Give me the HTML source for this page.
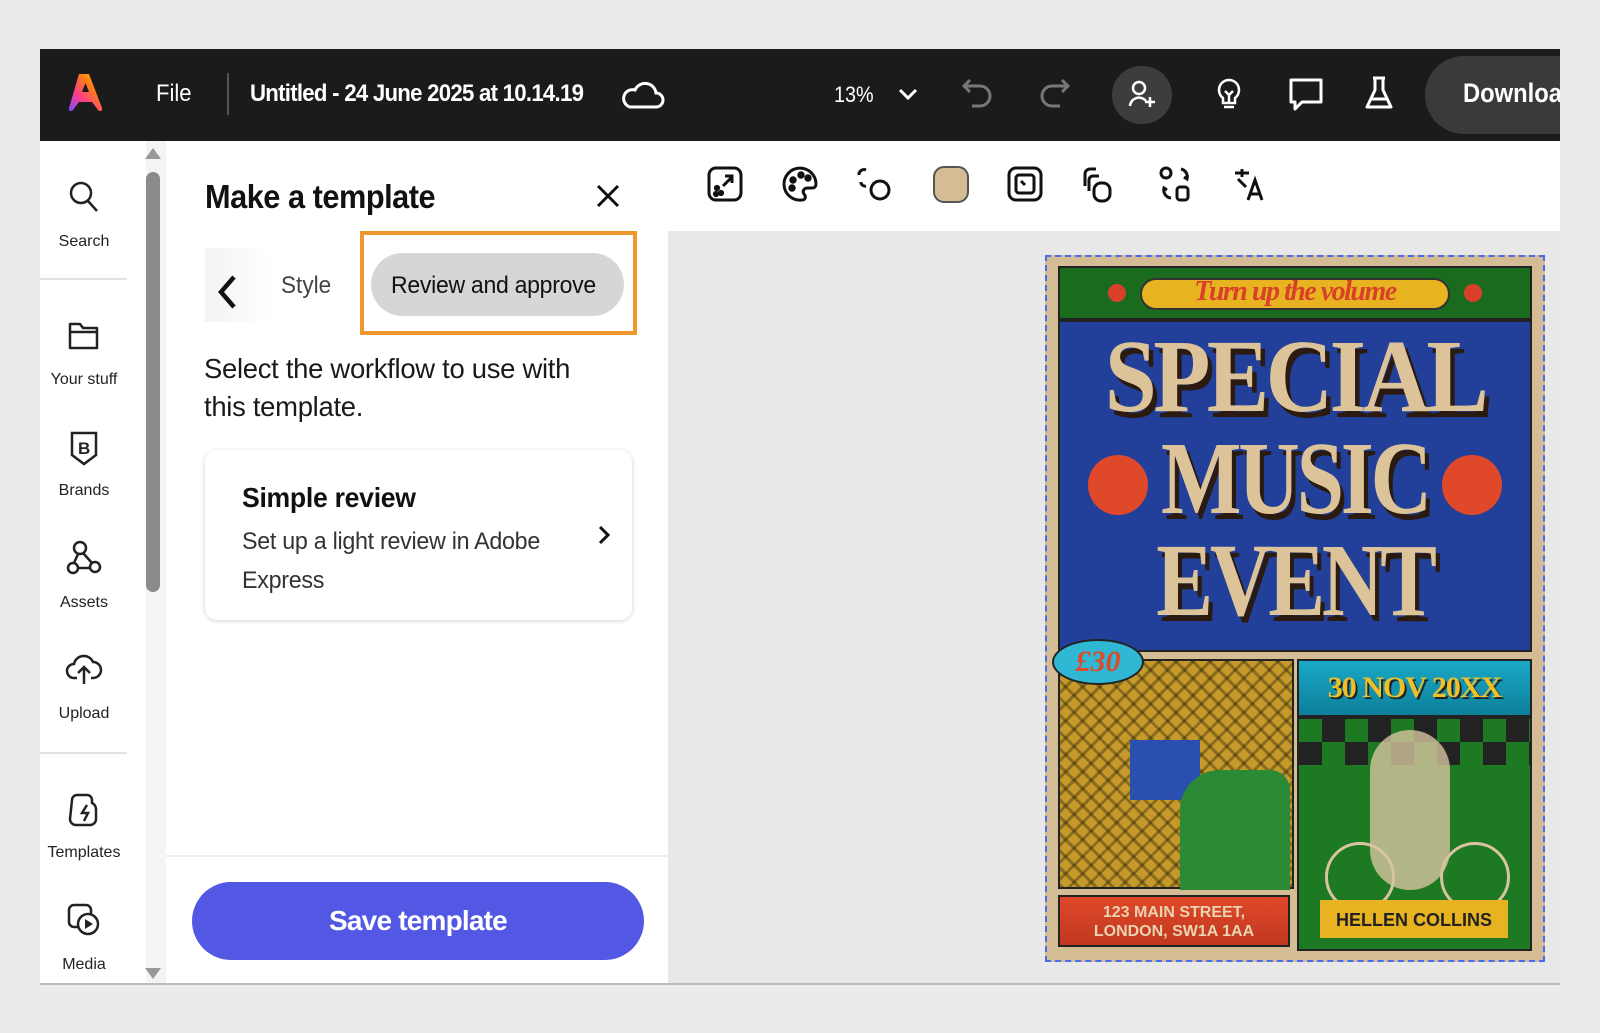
<!DOCTYPE html>
<html><head><meta charset="utf-8"><style>
*{margin:0;padding:0;box-sizing:border-box}
body{width:1600px;height:1033px;background:#ebebeb;font-family:"Liberation Sans",sans-serif;position:relative;overflow:hidden}
.a{position:absolute}
.top{left:40px;top:49px;width:1520px;height:92px;background:#1b1b1b}
.wt{color:#fff;font-size:24px}
.rail{left:40px;top:141px;width:125px;height:843px;background:#fff}
.ri{width:88px;text-align:center;font-size:16px;color:#222}
.panel{left:166px;top:141px;width:502px;height:843px;background:#fff}
.canvas{left:668px;top:141px;width:892px;height:843px;background:#e8e8e8}
.tb{left:668px;top:141px;width:892px;height:90px;background:#fff}
svg{overflow:visible}
.sx{transform-origin:0 0;white-space:nowrap}
</style></head><body>
<div class="a top"></div>
<svg class="a" style="left:65px;top:72px" width="38" height="40" viewBox="0 0 38 40"><defs><linearGradient id="g" x1="0" y1="1" x2="1" y2="0"><stop offset="0" stop-color="#7a4dff"/><stop offset=".35" stop-color="#ff3c8c"/><stop offset=".65" stop-color="#ff7a1a"/><stop offset="1" stop-color="#ffcc00"/></linearGradient></defs><path d="M14 2h10l13 34c1 3-2 4-4 2l-6-8H14l-6 8c-2 2-5 1-4-2z M17 20h7l-3.5-9z" fill="url(#g)" fill-rule="evenodd"/></svg>
<div class="a wt sx" style="left:156px;top:80px;transform:scaleX(.92)">File</div>
<div class="a" style="left:227px;top:73px;width:2px;height:42px;background:#555"></div>
<div class="a wt sx" style="left:250px;top:80px;font-weight:bold;letter-spacing:-0.8px;transform:scaleX(.925)">Untitled - 24 June 2025 at 10.14.19</div>
<svg class="a" style="left:622px;top:78px" width="42" height="32" viewBox="0 0 42 32"><path d="M8 29h26a7 7 0 0 0 0-14 11 11 0 0 0-21-3 8 8 0 0 0-5 17z" fill="none" stroke="#fff" stroke-width="3"/></svg>
<div class="a wt sx" style="left:834px;top:82px;font-size:22px;transform:scaleX(.9)">13%</div>
<svg class="a" style="left:898px;top:88px" width="20" height="14"><path d="M2 2l8 8 8-8" fill="none" stroke="#fff" stroke-width="3"/></svg>
<svg class="a" style="left:960px;top:76px" width="36" height="36"><path d="M10 4L4 10l6 6M4 10h16a10 10 0 0 1 0 20h-8" fill="none" stroke="#777" stroke-width="3"/></svg>
<svg class="a" style="left:1036px;top:76px" width="36" height="36"><path d="M26 4l6 6-6 6M32 10H16a10 10 0 0 0 0 20h8" fill="none" stroke="#777" stroke-width="3"/></svg>
<div class="a" style="left:1112px;top:66px;width:60px;height:58px;border-radius:30px;background:#3d3d3d"></div>
<svg class="a" style="left:1128px;top:80px" width="30" height="30"><circle cx="11" cy="8" r="6" fill="none" stroke="#fff" stroke-width="2.5"/><path d="M2 26a9 9 0 0 1 16-5M22 17v10M17 22h10" fill="none" stroke="#fff" stroke-width="2.5"/></svg>
<svg class="a" style="left:1214px;top:77px" width="30" height="36"><path d="M15 3a10 10 0 0 0-6 18v5h12v-5a10 10 0 0 0-6-18zM10 30h10M11 14l4 4 4-4M15 18v8" fill="none" stroke="#fff" stroke-width="2.5"/></svg>
<svg class="a" style="left:1288px;top:77px" width="36" height="36"><path d="M3 3h30v22H14l-7 7v-7H3z" fill="none" stroke="#fff" stroke-width="3" stroke-linejoin="round"/></svg>
<svg class="a" style="left:1364px;top:75px" width="30" height="38"><path d="M9 3h12M11 3v12L3 32h24L19 15V3M7 24h16" fill="none" stroke="#fff" stroke-width="3" stroke-linejoin="round"/></svg>
<div class="a" style="left:1425px;top:56px;width:135px;height:78px;border-radius:39px 0 0 39px;background:#3a3a3a;overflow:hidden"><div class="wt sx" style="position:absolute;left:38px;top:22px;font-size:27px;font-weight:bold;transform:scaleX(.88)">Download</div></div>

<div class="a rail"></div>
<div class="a" style="left:40px;top:278px;width:87px;height:2px;background:#e3e3e3"></div>
<div class="a" style="left:40px;top:752px;width:87px;height:2px;background:#e3e3e3"></div>
<svg class="a" style="left:68px;top:180px" width="32" height="34"><circle cx="13" cy="13" r="10" fill="none" stroke="#222" stroke-width="2.5"/><path d="M20 21l9 10" stroke="#222" stroke-width="2.5"/></svg>
<div class="a ri" style="left:40px;top:233px">Search</div>
<svg class="a" style="left:68px;top:320px" width="32" height="30"><path d="M2 4h10l3 4h14v20H2zM2 12h27" fill="none" stroke="#222" stroke-width="2.5" stroke-linejoin="round"/></svg>
<div class="a ri" style="left:40px;top:371px">Your stuff</div>
<svg class="a" style="left:68px;top:430px" width="32" height="36"><path d="M4 3h24v22l-12 9-12-9z" fill="none" stroke="#222" stroke-width="2.5"/><text x="10" y="24" font-family="Liberation Sans" font-weight="bold" font-size="17" fill="#222">B</text></svg>
<div class="a ri" style="left:40px;top:482px">Brands</div>
<svg class="a" style="left:66px;top:540px" width="36" height="36"><circle cx="14" cy="8" r="6" fill="none" stroke="#222" stroke-width="2.5"/><circle cx="7" cy="28" r="5" fill="none" stroke="#222" stroke-width="2.5"/><circle cx="29" cy="27" r="5" fill="none" stroke="#222" stroke-width="2.5"/><path d="M12 14l-4 9M17 13l9 10M12 28h12" stroke="#222" stroke-width="2.5"/></svg>
<div class="a ri" style="left:40px;top:594px">Assets</div>
<svg class="a" style="left:66px;top:652px" width="36" height="34"><path d="M11 26H8a7 7 0 0 1 0-14 10 10 0 0 1 19-2 8 8 0 0 1 0 16h-2M18 16v16M12 21l6-6 6 6" fill="none" stroke="#222" stroke-width="2.5"/></svg>
<div class="a ri" style="left:40px;top:705px">Upload</div>
<svg class="a" style="left:66px;top:792px" width="36" height="36"><path d="M6 8a5 5 0 0 1 5-5h10a5 5 0 0 1 5 5v3a7 7 0 0 1 4 6v10a6 6 0 0 1-6 6H10a6 6 0 0 1-6-6z" fill="none" stroke="#222" stroke-width="2.5"/><path d="M21 13l-5 8h6l-4 8" fill="none" stroke="#222" stroke-width="2.5"/></svg>
<div class="a ri" style="left:40px;top:844px">Templates</div>
<svg class="a" style="left:66px;top:902px" width="36" height="36"><rect x="3" y="3" width="22" height="22" rx="5" fill="none" stroke="#222" stroke-width="2.5"/><circle cx="22" cy="22" r="10" fill="#fff" stroke="#222" stroke-width="2.5"/><path d="M19 17v10l8-5z" fill="#222"/></svg>
<div class="a ri" style="left:40px;top:956px">Media</div>

<div class="a" style="left:146px;top:141px;width:20px;height:843px;background:#f4f4f4"></div>
<div class="a" style="left:145px;top:148px;width:0;height:0;border-left:8px solid transparent;border-right:8px solid transparent;border-bottom:11px solid #999"></div>
<div class="a" style="left:146px;top:172px;width:14px;height:420px;border-radius:7px;background:#8b8b8b"></div>
<div class="a" style="left:145px;top:968px;width:0;height:0;border-left:8px solid transparent;border-right:8px solid transparent;border-top:11px solid #999"></div>

<div class="a panel"></div>
<div class="a sx" style="left:205px;top:178px;font-size:33px;font-weight:bold;color:#111;letter-spacing:-0.5px;transform:scaleX(.93)">Make a template</div>
<svg class="a" style="left:596px;top:184px" width="24" height="24"><path d="M2 2l20 20M22 2L2 22" stroke="#111" stroke-width="3"/></svg>
<div class="a" style="left:205px;top:248px;width:66px;height:74px;background:linear-gradient(90deg,#f3f3f3,#fff)"></div>
<svg class="a" style="left:216px;top:274px" width="22" height="36"><path d="M18 3L5 18l13 15" fill="none" stroke="#111" stroke-width="4.5"/></svg>
<div class="a sx" style="left:281px;top:272px;font-size:24px;color:#444;transform:scaleX(.94)">Style</div>
<div class="a" style="left:360px;top:231px;width:277px;height:104px;border:4px solid #f0962e"></div>
<div class="a" style="left:371px;top:253px;width:253px;height:63px;border-radius:32px;background:#d6d6d6"></div>
<div class="a sx" style="left:391px;top:272px;font-size:24px;color:#111;letter-spacing:-0.3px;transform:scaleX(.96)">Review and approve</div>
<div class="a sx" style="left:204px;top:350px;font-size:28px;line-height:38px;color:#1a1a1a;letter-spacing:-0.3px;transform:scaleX(.98)">Select the workflow to use with<br>this template.</div>
<div class="a" style="left:205px;top:450px;width:427px;height:170px;border-radius:12px;background:#fff;box-shadow:0 1px 5px rgba(0,0,0,.18)"></div>
<div class="a sx" style="left:242px;top:482px;font-size:28px;font-weight:bold;color:#111;letter-spacing:-0.3px;transform:scaleX(.95)">Simple review</div>
<div class="a sx" style="left:242px;top:522px;font-size:24px;line-height:39px;color:#333;letter-spacing:-0.3px;transform:scaleX(.97)">Set up a light review in Adobe<br>Express</div>
<svg class="a" style="left:597px;top:525px" width="14" height="20"><path d="M3 2l8 8-8 8" fill="none" stroke="#111" stroke-width="3"/></svg>
<div class="a" style="left:166px;top:855px;width:502px;height:2px;background:#eee"></div>
<div class="a" style="left:192px;top:882px;width:452px;height:78px;border-radius:39px;background:#5258e3"></div>
<div class="a" style="left:192px;top:882px;width:452px;height:78px;color:#fff;font-size:28px;font-weight:bold;text-align:center;line-height:78px;letter-spacing:-0.8px">Save template</div>

<div class="a canvas"></div>
<div class="a tb"></div>
<svg class="a" style="left:707px;top:166px" width="740" height="40" fill="none" stroke="#111" stroke-width="3">
<g transform="translate(0,0)"><rect x="2" y="2" width="32" height="32" rx="7"/><path d="M16 20l9-9M18 10h7v7"/><circle cx="10" cy="22" r="1.6" fill="#111"/><circle cx="14" cy="27" r="1.6" fill="#111"/><circle cx="9" cy="28" r="1.6" fill="#111"/></g>
<g transform="translate(75,0)"><path d="M34 18A16 16 0 1 0 20 34c4 0 4-4 2-6-2-3 0-6 4-6h4c3 0 4-2 4-4z"/><circle cx="11" cy="14" r="2.2" fill="#111"/><circle cx="19" cy="9" r="2.2" fill="#111"/><circle cx="10" cy="22" r="2.2" fill="#111"/><circle cx="26" cy="12" r="2.2" fill="#111"/></g>
<g transform="translate(150,0)"><circle cx="23" cy="24" r="9"/><path d="M2 9a5 5 0 0 1 7-5M4 16a4 4 0 0 0 5 4"/></g>
<g transform="translate(225,0)"><rect x="2" y="1" width="34" height="35" rx="10" fill="#d4bc94" stroke="#555" stroke-width="2"/></g>
<g transform="translate(300,0)"><rect x="2" y="2" width="32" height="32" rx="7"/><rect x="9" y="9" width="18" height="18" rx="3"/><path d="M14 15l4 4"/></g>
<g transform="translate(376,0)"><path d="M2 20V8a5 5 0 0 1 5-5h6M6 25V14a4 4 0 0 1 4-4h6"/><rect x="11" y="17" width="16" height="18" rx="7"/></g>
<g transform="translate(452,0)"><circle cx="7" cy="7" r="5"/><rect x="18" y="21" width="11" height="13" rx="3"/><path d="M22 3a8 8 0 0 1 6 10l-3-2M12 32a8 8 0 0 1-7-10l3 2"/></g>
<g transform="translate(526,0)"><path d="M9 3v8M2 7h14M5 13l8 8M15 34l7-20 7 20M18 28h8"/></g>
</svg>

<!-- Poster -->
<div class="a" style="left:1045px;top:255px;width:500px;height:707px;border:2px dashed #4a6af0;background:#d4bc94"></div>
<div class="a" style="left:1058px;top:266px;width:474px;height:54px;background:#1b6b1e;border:2px solid #222"></div>
<div class="a" style="left:1140px;top:278px;width:310px;height:32px;border-radius:16px;background:#e8b321;border:2px solid #333"></div>
<div class="a" style="left:1140px;top:276px;width:310px;text-align:center;font-family:'Liberation Serif',serif;font-style:italic;font-weight:bold;font-size:28px;color:#d8402a;letter-spacing:-1.5px">Turn up the volume</div>
<div class="a" style="left:1108px;top:284px;width:18px;height:18px;border-radius:50%;background:#d8402a"></div>
<div class="a" style="left:1464px;top:284px;width:18px;height:18px;border-radius:50%;background:#d8402a"></div>
<div class="a" style="left:1058px;top:320px;width:474px;height:332px;background:#22409a;border:2px solid #222"></div>
<div class="a" style="left:1088px;top:455px;width:60px;height:60px;border-radius:50%;background:#e0482a"></div>
<div class="a" style="left:1442px;top:455px;width:60px;height:60px;border-radius:50%;background:#e0482a"></div>
<div class="a" style="left:1058px;top:326px;width:474px;text-align:center;font-family:'Liberation Serif',serif;font-weight:bold;font-size:104px;line-height:102px;color:#dcc39a;text-shadow:5px 6px 0 #2a1a10;letter-spacing:-4px"><div style="transform:scaleX(.9)">SPECIAL</div><div style="transform:scaleX(.82)">MUSIC</div><div style="transform:scaleX(.82)">EVENT</div></div>
<div class="a" style="left:1058px;top:659px;width:236px;height:230px;background:#c69a2a;border:2px solid #222;background-image:repeating-linear-gradient(45deg,rgba(0,0,0,.3) 0 3px,transparent 3px 12px),repeating-linear-gradient(-45deg,rgba(0,0,0,.3) 0 3px,transparent 3px 12px)"></div>
<div class="a" style="left:1130px;top:740px;width:70px;height:60px;background:#2a4fb0"></div>
<div class="a" style="left:1180px;top:770px;width:110px;height:120px;border-radius:40px 20px 0 0;background:#2a8a36"></div>
<div class="a" style="left:1052px;top:639px;width:92px;height:46px;border-radius:50%;background:#2fb7d3;border:2px solid #222;text-align:center;font-family:'Liberation Serif',serif;font-style:italic;font-weight:bold;font-size:30px;line-height:42px;color:#e0482a">£30</div>
<div class="a" style="left:1297px;top:659px;width:235px;height:58px;background:linear-gradient(#19a9c7,#0d7f9a);border:2px solid #222;text-align:center;font-family:'Liberation Serif',serif;font-weight:bold;font-size:30px;line-height:54px;color:#f0c028;text-shadow:2px 2px 0 #222;letter-spacing:-1px">30 NOV 20XX</div>
<div class="a" style="left:1297px;top:717px;width:235px;height:234px;background:#1d7a22;border:2px solid #222;background-image:repeating-conic-gradient(#222 0 25%,transparent 0 50%);background-size:46px 46px;background-repeat:repeat-x;"></div>
<div class="a" style="left:1297px;top:807px;width:235px;height:144px;background:#1d7a22;border:2px solid #222;border-top:0"></div>
<div class="a" style="left:1370px;top:730px;width:80px;height:160px;border-radius:40px;background:#d8c4a0;opacity:.8"></div>
<div class="a" style="left:1325px;top:842px;width:70px;height:70px;border-radius:50%;border:3px solid #d8c4a0"></div>
<div class="a" style="left:1440px;top:842px;width:70px;height:70px;border-radius:50%;border:3px solid #d8c4a0"></div>
<div class="a" style="left:1320px;top:900px;width:188px;height:38px;background:#e8b321;text-align:center;font-weight:bold;font-size:18px;line-height:40px;color:#222">HELLEN COLLINS</div>
<div class="a" style="left:1058px;top:895px;width:232px;height:52px;background:linear-gradient(#e0482a,#c0381f);border:2px solid #222;text-align:center;font-weight:bold;font-size:16px;line-height:19px;color:#e8d4b0;padding-top:6px">123 MAIN STREET,<br>LONDON, SW1A 1AA</div>

<div class="a" style="left:40px;top:983px;width:1520px;height:2px;background:#bbb"></div>
</body></html>
